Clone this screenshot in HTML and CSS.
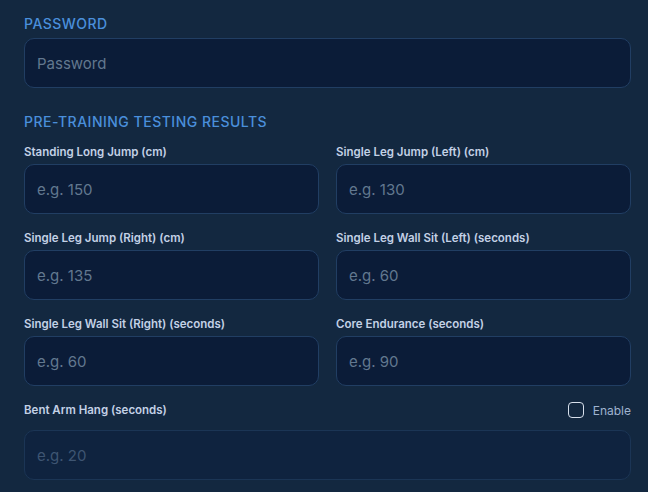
FILE: index.html
```html
<!DOCTYPE html>
<html>
<head>
<meta charset="utf-8">
<link rel="stylesheet" href="styles.css">
</head>
<body>
<div class="form">
  <section class="section">
    <h2 class="section-title">Password</h2>
    <input class="input" type="password" placeholder="Password">
  </section>
  <section class="section">
    <h2 class="section-title">Pre-Training Testing Results</h2>
    <div class="grid">
      <label class="field"><span class="label">Standing Long Jump (cm)</span><input class="input" placeholder="e.g. 150"></label>
      <label class="field"><span class="label">Single Leg Jump (Left) (cm)</span><input class="input" placeholder="e.g. 130"></label>
      <label class="field"><span class="label">Single Leg Jump (Right) (cm)</span><input class="input" placeholder="e.g. 135"></label>
      <label class="field"><span class="label">Single Leg Wall Sit (Left) (seconds)</span><input class="input" placeholder="e.g. 60"></label>
      <label class="field"><span class="label">Single Leg Wall Sit (Right) (seconds)</span><input class="input" placeholder="e.g. 60"></label>
      <label class="field"><span class="label">Core Endurance (seconds)</span><input class="input" placeholder="e.g. 90"></label>
      <div class="field full">
        <div class="label-row">
          <span class="label">Bent Arm Hang (seconds)</span>
          <label class="enable"><span class="box"></span>Enable</label>
        </div>
        <input class="input" placeholder="e.g. 20" disabled>
      </div>
    </div>
  </section>
</div>
</body>
</html>
```
FILE: styles.css
```css
* { box-sizing: border-box; }
html, body { margin: 0; background: #132840; }
body {
  font-family: Inter, "Noto Sans", sans-serif;
  padding: 15px 17px 0 24px;
  height: 492px;
  overflow: hidden;
}
.form { display: flex; flex-direction: column; gap: 25px; }
.section { display: flex; flex-direction: column; }
.section-title {
  margin: 0 0 6px;
  font-size: 14px;
  font-weight: 500;
  text-transform: uppercase;
  letter-spacing: 0.5px;
  color: #4a8fdb;
  line-height: 17px;
}
.input {
  display: block;
  width: 100%;
  height: 50px;
  background: #0b1c38;
  border: 1px solid #213e63;
  border-radius: 10px;
  padding: 0 12px;
  font-family: inherit;
  font-size: 15px;
  color: #e1e8f2;
  outline: none;
}
.input::placeholder { color: #62788f; }
.input:disabled { background: #0f233f; border-color: #1b3555; }
.input:disabled::placeholder { color: #3e5572; }
.grid {
  display: grid;
  grid-template-columns: 1fr 1fr;
  column-gap: 17px;
  row-gap: 18px;
  margin-top: 10px;
}
.field { display: flex; flex-direction: column; gap: 6px; }
.full { grid-column: 1 / -1; }
.label {
  font-size: 11.5px;
  font-weight: 600;
  color: #c3d1e6;
  line-height: 12px;
}
.label-row {
  display: flex;
  justify-content: space-between;
  align-items: center;
  height: 12px;
  margin-bottom: 8px;
}
.enable {
  display: flex;
  align-items: center;
  gap: 9px;
  font-size: 12px;
  color: #9fb3cf;
}
.box {
  width: 16px;
  height: 16px;
  border: 1.5px solid #d7e0ec;
  border-radius: 4px;
}
```
